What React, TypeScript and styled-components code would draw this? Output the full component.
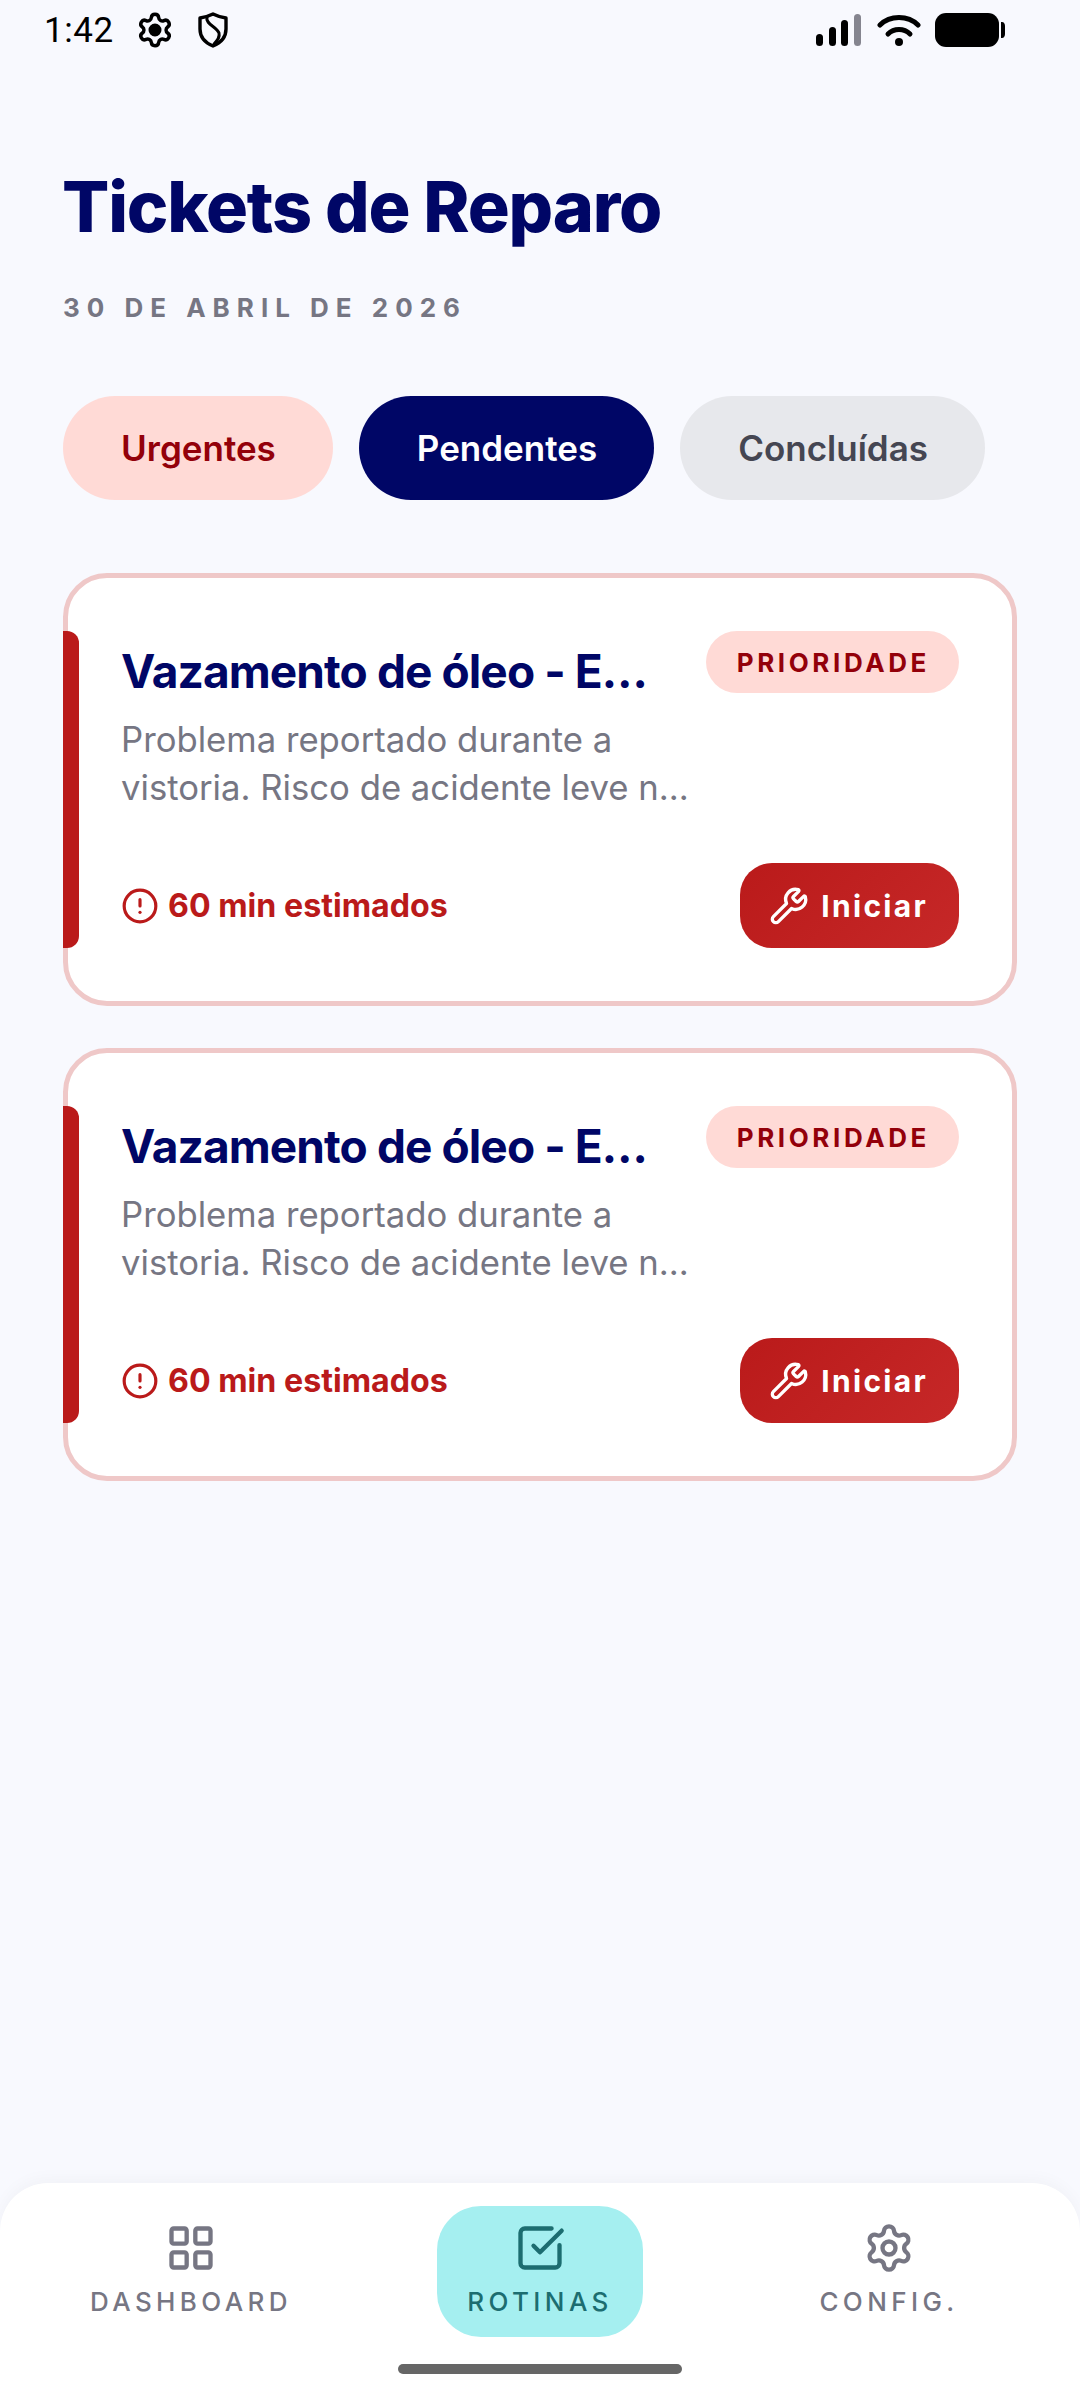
import React from 'react';
import styled, { createGlobalStyle } from 'styled-components';
import { CircleAlert, LayoutGrid, Settings, SquareCheckBig, Wrench } from 'lucide-react';

const GlobalStyle = createGlobalStyle`
  html, body {
    margin: 0;
    padding: 0;
    background: #f8f9fe;
  }
  * {
    box-sizing: border-box;
  }
`;

const Page = styled.div`
  width: 1080px;
  height: 2400px;
  display: flex;
  flex-direction: column;
  overflow: hidden;
  background: #f8f9fe;
  font-family: Inter, 'Noto Sans', sans-serif;
`;

const StatusBar = styled.div`
  height: 60px;
  display: flex;
  align-items: center;
  padding: 0 75px 0 44px;
  color: #000;
`;

const Time = styled.span`
  font-family: Roboto, sans-serif;
  font-size: 35px;
  width: 92px;
  letter-spacing: 0.6px;
`;

const StatusGear = styled(Settings)`
  margin-right: 24px;
  circle {
    fill: #000;
  }
`;

const Space = styled.div`
  flex: 1;
`;

const SignalIcon = styled.svg`
  margin-right: 15px;
`;

const WifiIcon = styled.svg`
  margin-right: 14px;
`;

const Main = styled.main`
  flex: 1;
  padding: 105px 63px 0;
`;

const Title = styled.h1`
  margin: 0 0 0 -1px;
  font-size: 70px;
  line-height: 84px;
  font-weight: 800;
  letter-spacing: -1.2px;
  color: #000666;
`;

const DateLine = styled.div`
  margin-top: 43px;
  font-size: 26px;
  line-height: 32px;
  font-weight: 700;
  letter-spacing: 7px;
  color: #767683;
`;

const Chips = styled.div`
  margin-top: 72px;
  display: flex;
  gap: 26px;
`;

const Chip = styled.div<{ $bg: string; $fg: string }>`
  height: 104px;
  padding: 0 57px 0 58px;
  display: flex;
  align-items: center;
  border-radius: 52px;
  font-size: 35px;
  font-weight: 600;
  background: ${(p) => p.$bg};
  color: ${(p) => p.$fg};
`;

const Cards = styled.div`
  margin-top: 73px;
  display: flex;
  flex-direction: column;
  gap: 42px;
`;

const Card = styled.article`
  position: relative;
  height: 433px;
  padding: 53px 53px 53px 53px;
  border: 5px solid #efc8c8;
  border-radius: 44px;
  background: #fff;
`;

const AccentBar = styled.div`
  position: absolute;
  left: -5px;
  top: 53px;
  bottom: 53px;
  width: 16px;
  border-radius: 0 12px 12px 0;
  background: #ba1a1a;
`;

const CardHead = styled.div`
  display: flex;
  align-items: flex-start;
  justify-content: space-between;
`;

const CardTitle = styled.h2`
  margin: 11px 0 0;
  font-size: 46px;
  line-height: 58px;
  font-weight: 700;
  letter-spacing: -0.9px;
  color: #000666;
  white-space: nowrap;
`;

const Badge = styled.div`
  flex: none;
  height: 62px;
  padding: 0 29px 0 31px;
  display: flex;
  align-items: center;
  border-radius: 31px;
  background: #ffdad6;
  color: #93000a;
  font-size: 26px;
  font-weight: 700;
  letter-spacing: 3.6px;
`;

const Description = styled.p`
  margin: 15px 0 0;
  width: 575px;
  font-size: 34.7px;
  line-height: 48px;
  color: #767683;
`;

const CardFoot = styled.div`
  margin-top: 52px;
  display: flex;
  align-items: center;
  justify-content: space-between;
`;

const Estimate = styled.div`
  display: flex;
  align-items: center;
  gap: 9px;
  color: #ba1a1a;
  font-size: 32.2px;
  font-weight: 700;
`;

const StartButton = styled.button`
  height: 85px;
  padding: 0 31px 0 29px;
  display: flex;
  align-items: center;
  gap: 12px;
  border: 0;
  border-radius: 32px;
  background: linear-gradient(135deg, #ba1a1a, #c62828);
  color: #fff;
  font-family: inherit;
  font-size: 30px;
  font-weight: 700;
  letter-spacing: 2.3px;
`;

const BottomNav = styled.nav`
  height: 217px;
  padding-top: 23px;
  display: flex;
  flex-direction: column;
  align-items: center;
  border-radius: 48px 48px 0 0;
  background: #fff;
  box-shadow: 0 -4px 16px rgba(0, 0, 0, 0.03);
`;

const NavRow = styled.div`
  width: 1047px;
  display: grid;
  grid-template-columns: repeat(3, 1fr);
  justify-items: center;
`;

const NavItem = styled.div<{ $active?: boolean }>`
  width: 206px;
  height: 131px;
  padding-top: 16px;
  display: flex;
  flex-direction: column;
  align-items: center;
  gap: 12px;
  border-radius: 44px;
  background: ${(p) => (p.$active ? '#a5eff0' : 'transparent')};
  color: ${(p) => (p.$active ? '#1c6d70' : '#767683')};
`;

const NavLabel = styled.span`
  font-size: 26px;
  line-height: 32px;
  font-weight: 500;
  letter-spacing: 4.4px;
  white-space: nowrap;
`;

const HomeIndicator = styled.div`
  margin-top: 27px;
  width: 284px;
  height: 10px;
  border-radius: 5px;
  background: #666;
`;

function ShieldIcon() {
  return (
    <svg width="30" height="36" viewBox="0 0 30 36" fill="none" stroke="#000" strokeWidth="3.4" strokeLinejoin="round" strokeLinecap="round">
      <path d="M15 2 C19 4 24 5.5 28 6 V17 C28 25 22.5 31 15 34 C7.5 31 2 25 2 17 V6 C6 5.5 11 4 15 2 Z" />
      <path d="M9 5 C7 12 19 15 21 21 C22 25 20 28 16 32" strokeWidth="3" />
    </svg>
  );
}

function SignalBars() {
  return (
    <SignalIcon width="46" height="32" viewBox="0 0 46 32">
      <rect x="0" y="20" width="7" height="12" rx="3.5" fill="#000" />
      <rect x="13" y="13" width="7" height="19" rx="3.5" fill="#000" />
      <rect x="25" y="6" width="7" height="26" rx="3.5" fill="#000" />
      <rect x="38" y="0" width="7" height="32" rx="3.5" fill="#85858f" />
    </SignalIcon>
  );
}

function WifiGlyph() {
  return (
    <WifiIcon width="44" height="33" viewBox="0 0 44 33" fill="none" stroke="#000" strokeWidth="5" strokeLinecap="round">
      <path d="M3 11 C13 1 31 1 41 11" />
      <path d="M11 20 C17 14 27 14 33 20" />
      <circle cx="22" cy="28" r="4" fill="#000" stroke="none" />
    </WifiIcon>
  );
}

function BatteryGlyph() {
  return (
    <svg width="70" height="34" viewBox="0 0 70 34">
      <rect x="0" y="0" width="64" height="34" rx="11" fill="#000" />
      <path d="M66 9 H67 C69 9 70 11 70 13 V21 C70 23 69 25 67 25 H66 Z" fill="#000" />
    </svg>
  );
}

const tickets = [
  { id: 1, title: 'Vazamento de óleo - E…', text: 'Problema reportado durante a vistoria. Risco de acidente leve n…' },
  { id: 2, title: 'Vazamento de óleo - E…', text: 'Problema reportado durante a vistoria. Risco de acidente leve n…' },
];

export default function App() {
  return (
    <Page>
      <GlobalStyle />
      <StatusBar>
        <Time>1:42</Time>
        <StatusGear size={38} strokeWidth={2.2} color="#000" />
        <ShieldIcon />
        <Space />
        <SignalBars />
        <WifiGlyph />
        <BatteryGlyph />
      </StatusBar>
      <Main>
        <Title>Tickets de Reparo</Title>
        <DateLine>30 DE ABRIL DE 2026</DateLine>
        <Chips>
          <Chip $bg="#ffdad6" $fg="#93000a">Urgentes</Chip>
          <Chip $bg="#000666" $fg="#ffffff">Pendentes</Chip>
          <Chip $bg="#e7e8ec" $fg="#454652">Concluídas</Chip>
        </Chips>
        <Cards>
          {tickets.map((t) => (
            <Card key={t.id}>
              <AccentBar />
              <CardHead>
                <CardTitle>{t.title}</CardTitle>
                <Badge>PRIORIDADE</Badge>
              </CardHead>
              <Description>{t.text}</Description>
              <CardFoot>
                <Estimate>
                  <CircleAlert size={38} strokeWidth={2} />
                  60 min estimados
                </Estimate>
                <StartButton>
                  <Wrench size={40} strokeWidth={2} />
                  Iniciar
                </StartButton>
              </CardFoot>
            </Card>
          ))}
        </Cards>
      </Main>
      <BottomNav>
        <NavRow>
          <NavItem>
            <LayoutGrid size={52} strokeWidth={2} />
            <NavLabel>DASHBOARD</NavLabel>
          </NavItem>
          <NavItem $active>
            <SquareCheckBig size={52} strokeWidth={2} />
            <NavLabel>ROTINAS</NavLabel>
          </NavItem>
          <NavItem>
            <Settings size={52} strokeWidth={2} />
            <NavLabel>CONFIG.</NavLabel>
          </NavItem>
        </NavRow>
        <HomeIndicator />
      </BottomNav>
    </Page>
  );
}
